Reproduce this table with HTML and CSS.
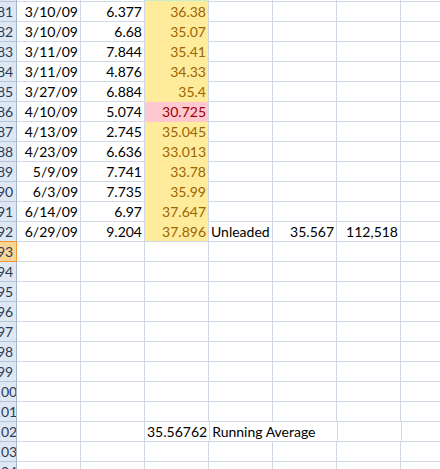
FILE: index.html
```html
<!DOCTYPE html>
<html>
<head>
<meta charset="utf-8">
<link rel="stylesheet" href="styles.css">
</head>
<body>
<div class="sheet">
  <div class="row top"><div class="h"><span></span></div><div class="c"></div><div class="c"></div><div class="c good"></div><div class="c"></div><div class="c"></div><div class="c"></div><div class="c"></div></div>
  <div class="row"><div class="h"><span>81</span></div><div class="c">3/10/09</div><div class="c">6.377</div><div class="c neutral">36.38</div><div class="c"></div><div class="c"></div><div class="c"></div><div class="c"></div></div>
  <div class="row"><div class="h"><span>82</span></div><div class="c">3/10/09</div><div class="c">6.68</div><div class="c neutral">35.07</div><div class="c"></div><div class="c"></div><div class="c"></div><div class="c"></div></div>
  <div class="row"><div class="h"><span>83</span></div><div class="c">3/11/09</div><div class="c">7.844</div><div class="c neutral">35.41</div><div class="c"></div><div class="c"></div><div class="c"></div><div class="c"></div></div>
  <div class="row"><div class="h"><span>84</span></div><div class="c">3/11/09</div><div class="c">4.876</div><div class="c neutral">34.33</div><div class="c"></div><div class="c"></div><div class="c"></div><div class="c"></div></div>
  <div class="row"><div class="h"><span>85</span></div><div class="c">3/27/09</div><div class="c">6.884</div><div class="c neutral">35.4</div><div class="c"></div><div class="c"></div><div class="c"></div><div class="c"></div></div>
  <div class="row"><div class="h"><span>86</span></div><div class="c">4/10/09</div><div class="c">5.074</div><div class="c bad">30.725</div><div class="c"></div><div class="c"></div><div class="c"></div><div class="c"></div></div>
  <div class="row"><div class="h"><span>87</span></div><div class="c">4/13/09</div><div class="c">2.745</div><div class="c neutral">35.045</div><div class="c"></div><div class="c"></div><div class="c"></div><div class="c"></div></div>
  <div class="row"><div class="h"><span>88</span></div><div class="c">4/23/09</div><div class="c">6.636</div><div class="c neutral">33.013</div><div class="c"></div><div class="c"></div><div class="c"></div><div class="c"></div></div>
  <div class="row"><div class="h"><span>89</span></div><div class="c">5/9/09</div><div class="c">7.741</div><div class="c neutral">33.78</div><div class="c"></div><div class="c"></div><div class="c"></div><div class="c"></div></div>
  <div class="row"><div class="h"><span>90</span></div><div class="c">6/3/09</div><div class="c">7.735</div><div class="c neutral">35.99</div><div class="c"></div><div class="c"></div><div class="c"></div><div class="c"></div></div>
  <div class="row"><div class="h"><span>91</span></div><div class="c">6/14/09</div><div class="c">6.97</div><div class="c neutral">37.647</div><div class="c"></div><div class="c"></div><div class="c"></div><div class="c"></div></div>
  <div class="row"><div class="h pre-sel"><span>92</span></div><div class="c">6/29/09</div><div class="c">9.204</div><div class="c neutral last">37.896</div><div class="c left">Unleaded</div><div class="c">35.567</div><div class="c">112,518</div><div class="c"></div></div>
  <div class="row"><div class="h sel"><span>93</span></div><div class="c"></div><div class="c"></div><div class="c"></div><div class="c"></div><div class="c"></div><div class="c"></div><div class="c"></div></div>
  <div class="row"><div class="h"><span>94</span></div><div class="c"></div><div class="c"></div><div class="c"></div><div class="c"></div><div class="c"></div><div class="c"></div><div class="c"></div></div>
  <div class="row"><div class="h"><span>95</span></div><div class="c"></div><div class="c"></div><div class="c"></div><div class="c"></div><div class="c"></div><div class="c"></div><div class="c"></div></div>
  <div class="row"><div class="h"><span>96</span></div><div class="c"></div><div class="c"></div><div class="c"></div><div class="c"></div><div class="c"></div><div class="c"></div><div class="c"></div></div>
  <div class="row"><div class="h"><span>97</span></div><div class="c"></div><div class="c"></div><div class="c"></div><div class="c"></div><div class="c"></div><div class="c"></div><div class="c"></div></div>
  <div class="row"><div class="h"><span>98</span></div><div class="c"></div><div class="c"></div><div class="c"></div><div class="c"></div><div class="c"></div><div class="c"></div><div class="c"></div></div>
  <div class="row"><div class="h"><span>99</span></div><div class="c"></div><div class="c"></div><div class="c"></div><div class="c"></div><div class="c"></div><div class="c"></div><div class="c"></div></div>
  <div class="row"><div class="h"><span>100</span></div><div class="c"></div><div class="c"></div><div class="c"></div><div class="c"></div><div class="c"></div><div class="c"></div><div class="c"></div></div>
  <div class="row"><div class="h"><span>101</span></div><div class="c"></div><div class="c"></div><div class="c"></div><div class="c"></div><div class="c"></div><div class="c"></div><div class="c"></div></div>
  <div class="row"><div class="h"><span>102</span></div><div class="c"></div><div class="c"></div><div class="c">35.56762</div><div class="c left wide">Running Average</div><div class="c"></div><div class="c"></div></div>
  <div class="row"><div class="h"><span>103</span></div><div class="c"></div><div class="c"></div><div class="c"></div><div class="c"></div><div class="c"></div><div class="c"></div><div class="c"></div></div>
  <div class="row"><div class="h"><span>104</span></div><div class="c"></div><div class="c"></div><div class="c"></div><div class="c"></div><div class="c"></div><div class="c"></div><div class="c"></div></div>
</div>
</body>
</html>
```
FILE: styles.css
```css
html, body {
  margin: 0;
  padding: 0;
  background: #ffffff;
  overflow: hidden;
}
.sheet {
  width: 440px;
  height: 469px;
  overflow: hidden;
  font-family: Lato, "Liberation Sans", sans-serif;
  font-size: 14px;
  color: #000;
}
.row {
  display: flex;
  height: 20px;
}
.row.top {
  height: 2px;
}
.h {
  flex: 0 0 17px;
  box-sizing: border-box;
  background: #dfe7f2;
  border-right: 1px solid #9eb6ce;
  border-bottom: 1px solid #b4c6dc;
  overflow: hidden;
  display: flex;
  align-items: flex-end;
}
.h span {
  flex: 0 0 34px;
  margin-left: -12px;
  text-align: center;
  line-height: 18px;
  color: #2b3c57;
  white-space: nowrap;
}
.h.pre-sel {
  border-bottom-color: #f29436;
}
.h.sel {
  background: #f9d595;
  border-bottom-color: #f29436;
  border-right-color: #f29436;
}
.c {
  flex: 0 0 64px;
  box-sizing: border-box;
  border-right: 1px solid #d0d7e5;
  border-bottom: 1px solid #d0d7e5;
  padding: 0 2px;
  display: flex;
  align-items: flex-end;
  justify-content: flex-end;
  line-height: 18px;
  white-space: nowrap;
}
.c.left {
  justify-content: flex-start;
}
.c.wide {
  flex-basis: 128px;
}
.neutral {
  background: #ffeb9c;
  color: #9c6500;
  border-bottom-color: #ffeb9c;
}
.neutral.last {
  border-bottom-color: #d0d7e5;
}
.bad {
  background: #ffc7ce;
  color: #9c0006;
  border-bottom-color: #ffc7ce;
}
.good {
  background: #c6efce;
  border-bottom-color: #ffeb9c;
}
```
